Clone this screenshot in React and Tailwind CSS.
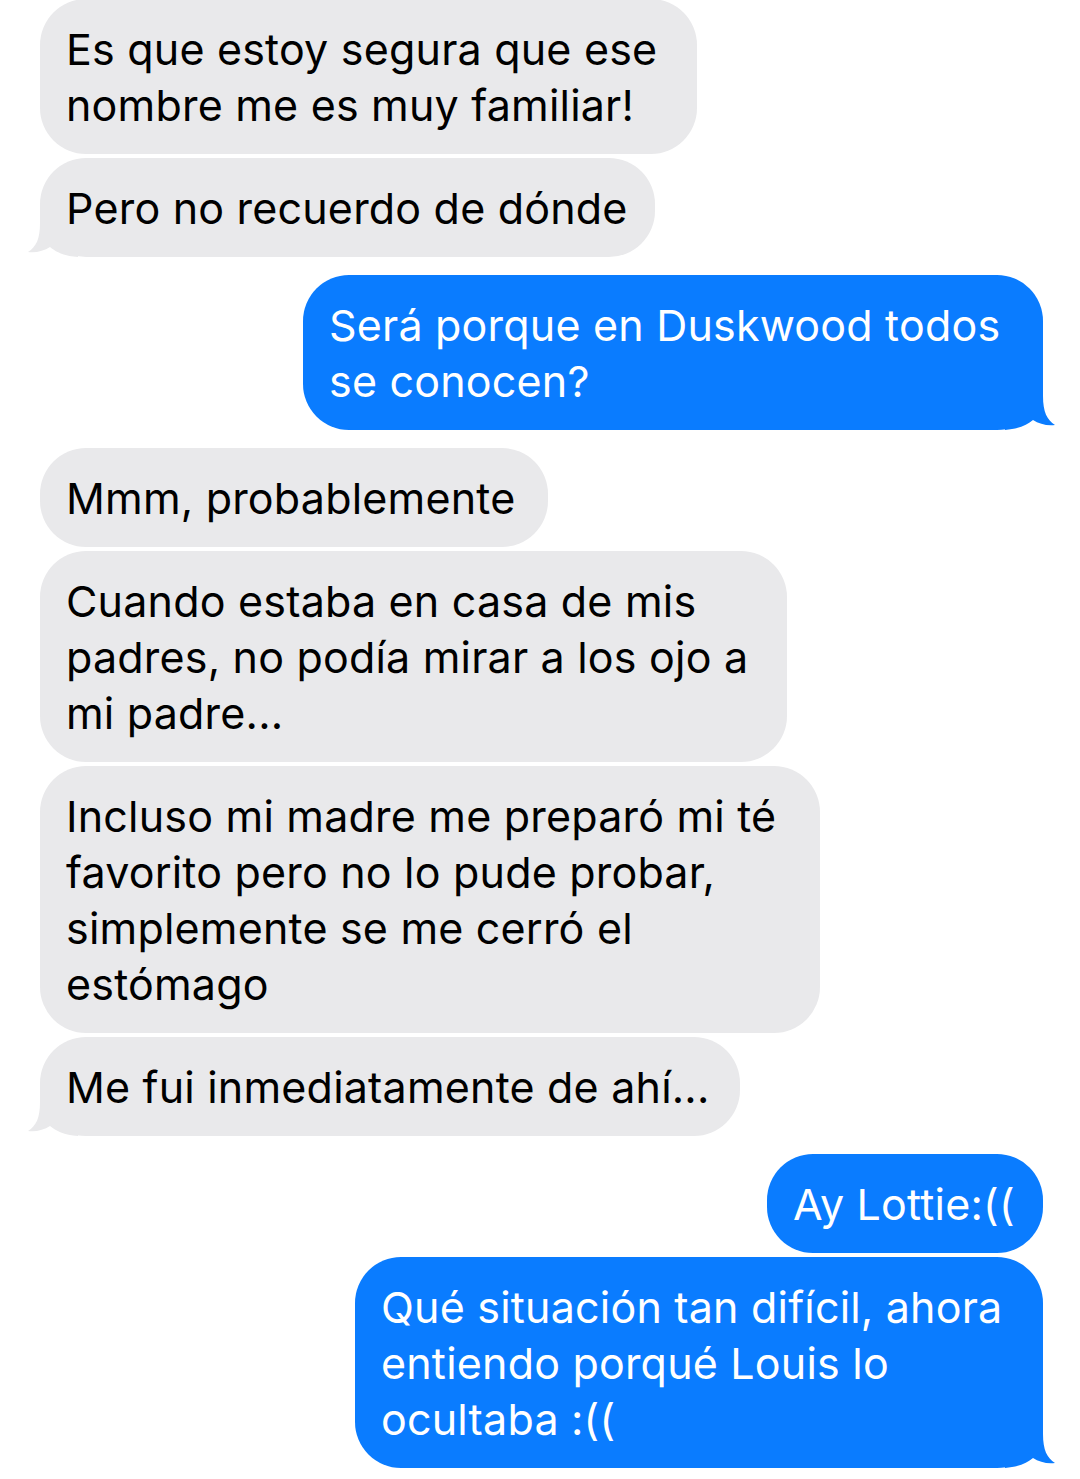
const messages = [
  { from: 'them', w: 'w-[657px]', lines: ['Es que estoy segura que ese', 'nombre me es muy familiar!'] },
  { from: 'them', w: 'w-[615px]', tail: true, lines: ['Pero no recuerdo de dónde'] },
  { from: 'me', w: 'w-[740px]', tail: true, gap: true, lines: ['Será porque en Duskwood todos', 'se conocen?'] },
  { from: 'them', w: 'w-[508px]', gap: true, lines: ['Mmm, probablemente'] },
  {
    from: 'them',
    w: 'w-[747px]',
    lines: ['Cuando estaba en casa de mis', 'padres, no podía mirar a los ojo a', 'mi padre...'],
  },
  {
    from: 'them',
    w: 'w-[780px]',
    lines: [
      'Incluso mi madre me preparó mi té',
      'favorito pero no lo pude probar,',
      'simplemente se me cerró el',
      'estómago',
    ],
  },
  { from: 'them', w: 'w-[700px]', tail: true, lines: ['Me fui inmediatamente de ahí...'] },
  { from: 'me', w: 'w-[276px]', gap: true, lines: ['Ay Lottie:(('] },
  {
    from: 'me',
    w: 'w-[688px]',
    tail: true,
    lines: ['Qué situación tan difícil, ahora', 'entiendo porqué Louis lo', 'ocultaba :(('],
  },
];

function TailLeft() {
  return (
    <svg className="absolute -left-[12px] bottom-0" width="50" height="48" viewBox="0 0 50 48">
      <path
        d="M12 0 L12 14 C12 30 8 38 0 43 C8 44 16 42 22 38 C28 43 36 47 50 48 L50 0 Z"
        fill="#e9e9eb"
      />
    </svg>
  );
}

function TailRight() {
  return (
    <svg className="absolute -right-[12px] bottom-0" width="50" height="48" viewBox="0 0 50 48">
      <path
        d="M38 0 L38 14 C38 30 42 38 50 43 C42 44 34 42 28 38 C22 43 14 47 0 48 L0 0 Z"
        fill="#0a7cff"
      />
    </svg>
  );
}

function Bubble({ msg, first }) {
  const mine = msg.from === 'me';
  const spacing = first ? '-mt-px' : msg.gap ? 'mt-[18px]' : 'mt-[4px]';
  return (
    <div className={`flex ${mine ? 'justify-end' : 'justify-start'} ${spacing}`}>
      <div
        className={`relative ${msg.w} rounded-[46px] pl-[26px] pr-[20px] pt-[22px] pb-[21px] text-[43px] leading-[56px] tracking-[0.2px] whitespace-nowrap ${
          mine ? 'bg-[#0a7cff] text-white' : 'bg-[#e9e9eb] text-black'
        }`}
      >
        {msg.lines.map((line, i) => (
          <div key={i} className="relative z-10">
            {line}
          </div>
        ))}
        {msg.tail && (mine ? <TailRight /> : <TailLeft />)}
      </div>
    </div>
  );
}

export default function App() {
  return (
    <div
      className="w-[1080px] h-[1479px] bg-white pl-[40px] pr-[37px] overflow-hidden"
      style={{ fontFamily: 'Inter, "Noto Sans", sans-serif' }}
    >
      {messages.map((msg, i) => (
        <Bubble key={i} msg={msg} first={i === 0} />
      ))}
    </div>
  );
}
